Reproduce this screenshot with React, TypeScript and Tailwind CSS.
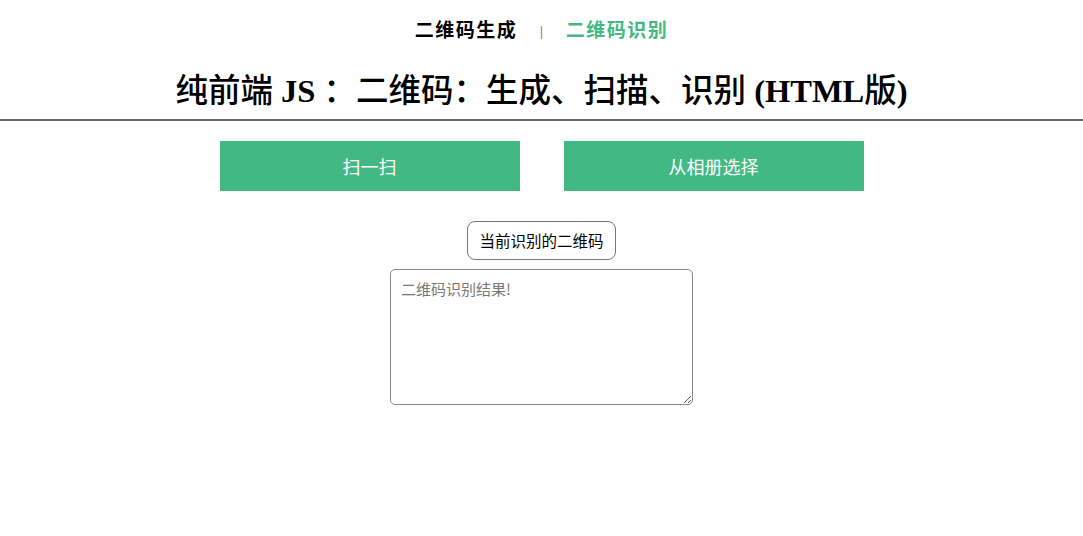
export default function App() {
  return (
    <div className="min-h-screen bg-white">
      {/* Nav */}
      <nav className="flex h-[60px] items-center justify-center pt-[2px] font-['Liberation_Serif','Noto_Sans_CJK_SC',serif] text-[19px] font-semibold">
        <span className="w-[104px] text-center tracking-[1.5px] text-black">二维码生成</span>
        <span className="mx-[22px] text-[14px] font-normal text-[#2d6b4e]">|</span>
        <span className="w-[104px] text-center tracking-[1.5px] text-[#42b983]">二维码识别</span>
      </nav>

      {/* Title */}
      <h1 className="flex h-[59px] items-center justify-center pt-[4px] font-['Liberation_Serif','Noto_Sans_CJK_SC',serif] text-[32.5px] font-medium text-black">
        纯前端<b className="font-bold">&nbsp;JS&nbsp;</b>：二维码：生成、扫描、识别<b className="font-bold">&nbsp;(HTML</b>版<b className="font-bold">)</b>
      </h1>
      <div className="h-[2px] w-full bg-[#666]" />

      {/* Buttons */}
      <div className="mt-[20px] flex justify-center gap-[44px] font-['Noto_Sans_CJK_SC',sans-serif]">
        <button className="h-[50px] w-[300px] bg-[#42b983] text-[18px] text-white">扫一扫</button>
        <button className="h-[50px] w-[300px] bg-[#42b983] text-[18px] text-white">从相册选择</button>
      </div>

      {/* Result */}
      <div className="mt-[30px] flex flex-col items-center font-['Noto_Sans_CJK_SC',sans-serif]">
        <div className="flex h-[39px] w-[149px] items-center justify-center rounded-[8px] border border-[#777] text-[15.5px] text-black">
          当前识别的二维码
        </div>
        <textarea
          placeholder="二维码识别结果!"
          className="mt-[9px] h-[136px] w-[303px] rounded-[5px] border border-[#888] px-[10px] py-[8px] text-[15px] text-black placeholder:text-[#777]"
        />
      </div>
    </div>
  );
}
